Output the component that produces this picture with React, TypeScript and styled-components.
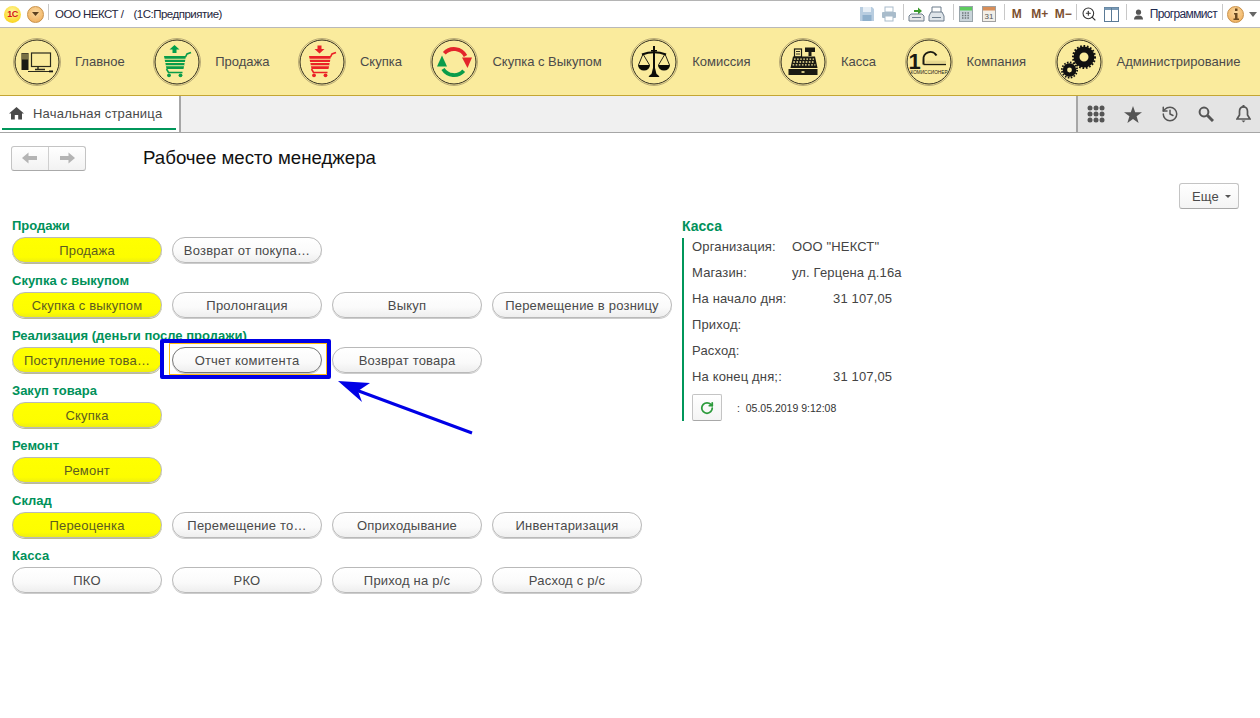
import React from "react";
import styled, { createGlobalStyle } from "styled-components";
import { History, RotateCw, ZoomIn } from "lucide-react";

const Global = createGlobalStyle`
  html, body { margin: 0; padding: 0; background: #fff; }
  body { font-family: "Liberation Sans", Arial, sans-serif; width: 1260px; height: 718px; overflow: hidden; }
  * { box-sizing: border-box; }
`;

const Page = styled.div`
  position: relative;
  width: 1260px;
  height: 718px;
  background: #fff;
`;

/* ---- title bar ---- */
const TitleBar = styled.header`
  height: 28px;
  border-top: 1px solid #b4b4b4;
  border-bottom: 1px solid #b9b9b9;
  display: flex;
  align-items: center;
  padding-left: 4px;
  background: #fff;
`;
const LogoDot = styled.span`
  width: 17px;
  height: 17px;
  border-radius: 50%;
  background: radial-gradient(circle at 50% 35%, #fff9a8, #fbd92c 70%, #eebc1c);
  color: #d5161c;
  font-size: 9px;
  font-weight: 700;
  display: flex;
  align-items: center;
  justify-content: center;
  letter-spacing: -0.5px;
  margin-right: 6px;
`;
const MenuDot = styled.span`
  width: 17px;
  height: 17px;
  border-radius: 50%;
  background: radial-gradient(circle at 50% 35%, #fbd9a0, #eeaa55);
  border: 1px solid #c89048;
  display: flex;
  align-items: center;
  justify-content: center;
  margin-right: 2px;
`;
const TitleSep = styled.span<{ $r: number; $l: number }>`
  width: 1px;
  height: 16px;
  margin: -4px ${(p) => p.$r}px 0 ${(p) => p.$l}px;
  background: #c8c8c8;
`;
const TitleText = styled.span<{ $gap?: number }>`
  font-size: 11.5px;
  color: #26263c;
  letter-spacing: -0.5px;
  white-space: nowrap;
  margin-left: ${(p) => p.$gap ?? 0}px;
`;
const Tools = styled.div`
  margin-left: auto;
  display: flex;
  align-items: center;
`;
const ToolIcon = styled.span<{ $w?: number }>`
  width: ${(p) => p.$w ?? 22}px;
  height: 22px;
  display: flex;
  align-items: center;
  justify-content: center;
`;
const Mem = styled.span<{ $w: number }>`
  width: ${(p) => p.$w}px;
  text-align: center;
  font-size: 12px;
  font-weight: 700;
  color: #7c5030;
`;
const UserName = styled.span`
  font-size: 12px;
  letter-spacing: -0.65px;
  color: #1f2a50;
  white-space: nowrap;
  margin-left: 5px;
`;

/* ---- section panel ---- */
const SectionBar = styled.nav`
  height: 68px;
  background: #faeb9d;
  border-bottom: 1px solid #c4a634;
  display: flex;
  align-items: center;
  gap: 28.5px;
  padding-left: 13px;
`;
const Section = styled.a`
  display: flex;
  align-items: center;
  gap: 14px;
  font-size: 13px;
  color: #4a4a4a;
  white-space: nowrap;
`;
const SectionIcon = styled.svg`
  width: 48px;
  height: 48px;
  flex: none;
`;

/* ---- tabs ---- */
const TabBar = styled.div`
  height: 37px;
  background: #f0f0f0;
  border-bottom: 1px solid #a6a6a6;
  display: flex;
  justify-content: space-between;
`;
const Tab = styled.div`
  width: 181px;
  height: 36px;
  background: #fff;
  border-right: 2px solid #a6a6a6;
  padding: 0 0 2px 9px;
  display: flex;
  align-items: center;
  gap: 9px;
  font-size: 13px;
  color: #4a4a4a;
  letter-spacing: 0.2px;
  position: relative;
  &::after {
    content: "";
    position: absolute;
    left: 2px;
    right: 3px;
    bottom: 2px;
    height: 2px;
    background: #00965a;
  }
`;
const TabTools = styled.div`
  width: 184px;
  height: 36px;
  background: #e4e4e4;
  border-left: 2px solid #a6a6a6;
  display: flex;
  align-items: center;
  padding-left: 8px;
  gap: 16.75px;
  color: #555;
`;
const TabTool = styled.span`
  width: 20px;
  height: 20px;
  display: flex;
  align-items: center;
  justify-content: center;
`;

/* ---- content ---- */
const Content = styled.main`
  padding: 12px 21px 0 12px;
`;
const HeadRow = styled.div`
  display: flex;
  align-items: center;
  height: 26px;
`;
const NavGroup = styled.div`
  width: 75px;
  height: 25px;
  margin-left: -1px;
  border: 1px solid #c4c4c4;
  border-bottom-color: #aaa;
  border-radius: 3px;
  background: linear-gradient(#fff, #f2f2f2);
  display: flex;
`;
const NavCell = styled.span`
  flex: 1;
  display: flex;
  align-items: center;
  justify-content: center;
  & + & { border-left: 1px solid #cfcfcf; }
`;
const PageTitle = styled.h1`
  margin: 0 0 0 57px;
  font-size: 18.67px;
  font-weight: 400;
  color: #111;
`;
const ActionRow = styled.div`
  display: flex;
  justify-content: flex-end;
  margin-top: 12px;
  height: 26px;
`;
const MoreButton = styled.button`
  width: 60px;
  height: 26px;
  font: inherit;
  font-size: 13px;
  letter-spacing: 0.2px;
  color: #4a4a4a;
  background: linear-gradient(#fff, #f4f4f4);
  border: 1px solid #c4c4c4;
  border-bottom-color: #a8a8a8;
  border-radius: 3px;
  display: flex;
  align-items: center;
  justify-content: center;
  gap: 6px;
  padding: 0 0 0 5px;
  &::after {
    content: "";
    border-left: 3px solid transparent;
    border-right: 3px solid transparent;
    border-top: 3px solid #555;
  }
`;
const Columns = styled.div`
  display: flex;
  margin-top: 8px;
`;
const LeftColumn = styled.div`
  width: 670px;
  display: flex;
  flex-direction: column;
  gap: 9px;
`;
const Group = styled.section`
  display: flex;
  flex-direction: column;
  gap: 2px;
`;
const GroupTitle = styled.h2`
  margin: 0;
  height: 18px;
  line-height: 18px;
  font-size: 13px;
  font-weight: 700;
  color: #00915a;
  white-space: nowrap;
`;
const ButtonRow = styled.div`
  display: flex;
  gap: 10px;
`;
const Pill = styled.button<{ $accent?: boolean; $wide?: boolean; $focus?: boolean }>`
  width: ${(p) => (p.$wide ? 180 : 150)}px;
  height: 26px;
  padding: 0 6px;
  border-radius: 13px;
  font: inherit;
  font-size: 13px;
  letter-spacing: 0.2px;
  white-space: nowrap;
  overflow: hidden;
  color: ${(p) => (p.$accent ? "#5c5c20" : "#4a4a4a")};
  background: ${(p) => (p.$accent ? "linear-gradient(#ffff00, #fdfd00 80%, #eeee10)" : "linear-gradient(#fff, #fafafa 60%, #eee)")};
  border: 1px solid ${(p) => (p.$focus ? "#777" : "#b9b9b9")};
  box-shadow: 0 1px 0 ${(p) => (p.$accent ? "#bcbc90" : "#ccc")};
`;

const Cash = styled.aside`
  display: flex;
  flex-direction: column;
  color: #4a4a4a;
  font-size: 13px;
`;
const CashTitle = styled.h2`
  margin: 0;
  height: 18px;
  line-height: 18px;
  font-size: 14px;
  font-weight: 700;
  color: #00915a;
`;
const CashBody = styled.div`
  margin-top: 3px;
  border-left: 2px solid #00965a;
  padding-left: 8px;
  height: 183px;
`;
const CashRow = styled.div`
  height: 26px;
  line-height: 18px;
  display: flex;
  align-items: flex-start;
  color: #444;
  letter-spacing: 0.15px;
`;
const CashLabel = styled.span`
  width: 100px;
`;
const CashValue = styled.span<{ $amount?: boolean }>`
  padding-left: ${(p) => (p.$amount ? 41 : 0)}px;
`;
const CashFoot = styled.div`
  display: flex;
  align-items: center;
  font-size: 10.5px;
  color: #333;
`;
const Refresh = styled.button`
  width: 30px;
  height: 27px;
  padding: 0;
  background: linear-gradient(#fff, #f4f4f4);
  border: 1px solid #c4c4c4;
  border-bottom-color: #a8a8a8;
  border-radius: 2px;
  color: #2d9b3c;
  display: flex;
  align-items: center;
  justify-content: center;
  margin-right: 15px;
`;
const Stamp = styled.span`
  white-space: pre;
`;

/* ---- overlays (annotation drawn over the page) ---- */
const Frame = styled.div`
  position: absolute;
  left: 160px;
  top: 339px;
  width: 171px;
  height: 40px;
  border: 4px solid #0000e6;
  border-radius: 2px;
  &::after {
    content: "";
    position: absolute;
    left: 5px;
    right: 0;
    top: 0;
    bottom: 0;
    border: 1px solid #ffb90f;
  }
`;
const Arrow = styled.svg`
  position: absolute;
  left: 330px;
  top: 370px;
  width: 150px;
  height: 70px;
`;

const Ring = () => (
  <>
    <circle cx="24" cy="24" r="23.5" fill="none" stroke="#a89a6c" strokeWidth="0.8" />
    <circle cx="24" cy="24" r="22" fill="none" stroke="#2e2a1c" strokeWidth="1" />
  </>
);

const Cart = ({ color }: { color: string }) => (
  <>
    <path d="M11 18H33L30.5 31H13.5Z" fill={color} />
    <path d="M11 21.3H33M11.5 24.5H32.5M12.5 27.7H31" stroke="#faeb9d" strokeWidth="1.1" />
    <path d="M13.5 31L15.5 34.5H29.5M32.5 19L34 16L38 14.4" fill="none" stroke={color} strokeWidth="1.6" />
    <circle cx="16" cy="37.3" r="1.9" fill={color} />
    <circle cx="27.5" cy="37.3" r="1.9" fill={color} />
  </>
);

const Icons: Record<string, React.ReactNode> = {
  main: (
    <>
      <rect x="8.5" y="15" width="7" height="17" fill="#1a1a14" />
      <rect x="9" y="15.5" width="6" height="6" fill="#776f44" />
      <rect x="18.5" y="15" width="19" height="13.5" fill="none" stroke="#2a2a1c" strokeWidth="1.2" />
      <path d="M25 28.5V31M22 31.5H32" stroke="#2a2a1c" strokeWidth="1.4" />
      <path d="M15 33.5H37" stroke="#2a2a1c" strokeWidth="1" />
      <rect x="36" y="32.5" width="4" height="1.8" fill="#111" />
    </>
  ),
  sale: (
    <>
      <path d="M21.5 7L26.5 11.5H23.5V15H19.5V11.5H16.5Z" fill="#00a04c" />
      <Cart color="#0a9c4a" />
    </>
  ),
  buy: (
    <>
      <path d="M21.5 15.5L26.5 11H23.5V7.5H19.5V11H16.5Z" fill="#ea2127" />
      <Cart color="#ea2127" />
    </>
  ),
  sync: (
    <>
      <path d="M14.3 15.3A13 13 0 0 1 35.5 18" fill="none" stroke="#e3262b" strokeWidth="3.8" />
      <path d="M32 19.5H42L37.5 30Z" fill="#e3262b" />
      <path d="M33.7 32.7A13 13 0 0 1 13 31" fill="none" stroke="#0a9c4a" strokeWidth="3.8" />
      <path d="M7 28.5H17L12 17.5Z" fill="#0a9c4a" />
    </>
  ),
  scale: (
    <>
      <path d="M23 8H25V12H27V13.5H25V30L26.5 36H21.5L23 30V13.5H21V12H23Z" fill="#0c0c08" />
      <path d="M18.5 39C20 36 22 36 24 34.5C26 36 28 36 29.5 39Z" fill="#0c0c08" />
      <path d="M12 16.5Q24 12 36 16.5" fill="none" stroke="#0c0c08" strokeWidth="2.2" />
      <path d="M13 16L8.5 27M13 16L19.5 27M35 16L28.5 27M35 16L39.5 27" stroke="#0c0c08" strokeWidth="0.9" />
      <path d="M8 27H20A6 5.5 0 0 1 8 27Z" fill="#0c0c08" />
      <path d="M28 27H40A6 5.5 0 0 1 28 27Z" fill="#0c0c08" />
    </>
  ),
  cash: (
    <>
      <rect x="15.5" y="11" width="7" height="8" fill="#faeb9d" stroke="#1a1a12" strokeWidth="1.2" />
      <path d="M17 13.5H21M17 16H21" stroke="#1a1a12" strokeWidth="0.9" />
      <path d="M26 9.5H36V14H32.5V18H29.5V14H26Z" fill="#1a1a12" />
      <path d="M14 18.5H36L38.5 30H11.5Z" fill="#1a1a12" />
      <path d="M15 21.2H35M14.3 24H35.7M13.6 26.8H36.4" stroke="#faeb9d" strokeWidth="1.3" strokeDasharray="1.6 1.5" />
      <rect x="9.5" y="31" width="29" height="6" fill="#1a1a12" />
      <rect x="22.5" y="33.2" width="3" height="1.6" fill="#faeb9d" />
    </>
  ),
  company: (
    <>
      <text x="3.5" y="31" fontFamily="Liberation Sans" fontWeight="700" fontSize="22" fill="#1a1a12">1</text>
      <path d="M18.5 26.5V22A7 7 0 0 1 31.5 17.5" fill="none" stroke="#1a1a12" strokeWidth="2" />
      <path d="M18.5 26.5H41" stroke="#1a1a12" strokeWidth="1.4" />
      <path d="M21 24H41" stroke="#e6d890" strokeWidth="2.6" />
      <text x="24" y="35.5" textAnchor="middle" fontFamily="Liberation Sans" fontSize="4.7" fill="#1a1a12">КОМИССИОНЕР</text>
    </>
  ),
  admin: (
    <>
      <circle cx="29" cy="19" r="7.5" fill="none" stroke="#111" strokeWidth="6" />
      <circle cx="29" cy="19" r="11" fill="none" stroke="#111" strokeWidth="2" strokeDasharray="1.7 1.7" />
      <circle cx="14.5" cy="32" r="4.6" fill="none" stroke="#111" strokeWidth="4.4" />
      <circle cx="14.5" cy="32" r="7.6" fill="none" stroke="#111" strokeWidth="1.8" strokeDasharray="1.6 1.4" />
    </>
  ),
};

const sections: [string, string][] = [
  ["main", "Главное"],
  ["sale", "Продажа"],
  ["buy", "Скупка"],
  ["sync", "Скупка с Выкупом"],
  ["scale", "Комиссия"],
  ["cash", "Касса"],
  ["company", "Компания"],
  ["admin", "Администрирование"],
];

type Btn = { t: string; a?: boolean; w?: boolean; f?: boolean };
const groups: { title: string; buttons: Btn[] }[] = [
  { title: "Продажи", buttons: [{ t: "Продажа", a: true }, { t: "Возврат от покупа…" }] },
  {
    title: "Скупка с выкупом",
    buttons: [{ t: "Скупка с выкупом", a: true }, { t: "Пролонгация" }, { t: "Выкуп" }, { t: "Перемещение в розницу", w: true }],
  },
  {
    title: "Реализация (деньги после продажи)",
    buttons: [{ t: "Поступление това…", a: true }, { t: "Отчет комитента", f: true }, { t: "Возврат товара" }],
  },
  { title: "Закуп товара", buttons: [{ t: "Скупка", a: true }] },
  { title: "Ремонт", buttons: [{ t: "Ремонт", a: true }] },
  {
    title: "Склад",
    buttons: [{ t: "Переоценка", a: true }, { t: "Перемещение то…" }, { t: "Оприходывание" }, { t: "Инвентаризация" }],
  },
  { title: "Касса", buttons: [{ t: "ПКО" }, { t: "РКО" }, { t: "Приход на р/с" }, { t: "Расход с р/с" }] },
];

const cashRows: [string, string, boolean][] = [
  ["Организация:", 'ООО "НЕКСТ"', false],
  ["Магазин:", "ул. Герцена д.16а", false],
  ["На начало дня:", "31 107,05", true],
  ["Приход:", "", false],
  ["Расход:", "", false],
  ["На конец дня;:", "31 107,05", true],
];

export default function App() {
  return (
    <Page>
      <Global />
      <TitleBar>
        <LogoDot>1С</LogoDot>
        <MenuDot>
          <svg width="9" height="6" viewBox="0 0 9 6"><path d="M1 1L4.5 5L8 1Z" fill="#5c4020" /></svg>
        </MenuDot>
        <TitleSep $l={2} $r={6} />
        <TitleText>ООО НЕКСТ /</TitleText>
        <TitleText $gap={10}>(1С:Предприятие)</TitleText>
        <Tools>
          <ToolIcon>
            <svg width="16" height="16" viewBox="0 0 16 16"><path d="M1 1H13L15 3V15H1Z" fill="#b8cde0" /><rect x="4" y="1" width="8" height="5" fill="#e6eef5" /><rect x="3.5" y="9" width="9" height="6" fill="#8fb0cc" /></svg>
          </ToolIcon>
          <ToolIcon>
            <svg width="16" height="16" viewBox="0 0 16 16"><rect x="4" y="1" width="8" height="5" fill="#fff" stroke="#a9bccb" /><rect x="1" y="6" width="14" height="6" rx="1" fill="#a9bccb" /><rect x="4" y="10" width="8" height="5" fill="#fff" stroke="#a9bccb" /></svg>
          </ToolIcon>
          <TitleSep $l={3} $r={2} />
          <ToolIcon>
            <svg width="17" height="16" viewBox="0 0 17 16"><path d="M6 4H10V1.5L14 5L10 8.5V6H6Z" fill="#3c9c2c" /><path d="M1 10L3 8H14L16 10V15H1Z" fill="#e8e8e8" stroke="#6c7c8c" /><path d="M4 11.5H13" stroke="#6c7c8c" /></svg>
          </ToolIcon>
          <ToolIcon $w={18}>
            <svg width="17" height="16" viewBox="0 0 17 16"><path d="M4 1H13V7H4Z" fill="#fff" stroke="#6c7c8c" /><path d="M1 10L3 6H14L16 10V15H1Z" fill="#dfe5ea" stroke="#6c7c8c" /><path d="M4 11.5H13" stroke="#6c7c8c" /></svg>
          </ToolIcon>
          <TitleSep $l={7} $r={1} />
          <ToolIcon>
            <svg width="14" height="16" viewBox="0 0 14 16"><rect x="0.5" y="0.5" width="13" height="15" fill="#c9d4da" stroke="#98a4aa" /><rect x="1" y="1" width="12" height="3.5" fill="#5ecb5e" /><path d="M3 7H11M3 9.5H11M3 12H11" stroke="#6a7478" strokeWidth="1.4" strokeDasharray="1.5 1.2" /></svg>
          </ToolIcon>
          <ToolIcon $w={24}>
            <svg width="14" height="16" viewBox="0 0 14 16"><rect x="0.5" y="0.5" width="13" height="15" fill="#f2efe8" stroke="#a0a0a0" /><rect x="1" y="1" width="12" height="3.5" fill="#d88e58" /><text x="7" y="13" textAnchor="middle" fontSize="8" fontFamily="Liberation Sans" fill="#555">31</text></svg>
          </ToolIcon>
          <TitleSep $l={3} $r={4} />
          <Mem $w={16}>М</Mem>
          <Mem $w={30}>М+</Mem>
          <Mem $w={14}>М−</Mem>
          <TitleSep $l={7} $r={1} />
          <ToolIcon>
            <ZoomIn size={16} color="#333" strokeWidth={1.6} />
          </ToolIcon>
          <ToolIcon $w={24}>
            <svg width="15" height="15" viewBox="0 0 15 15"><rect x="0.5" y="0.5" width="14" height="14" fill="#fff" stroke="#5a7a96" /><rect x="0.5" y="0.5" width="14" height="2.5" fill="#7a9ab6" /><path d="M7.5 1V14" stroke="#5a7a96" /></svg>
          </ToolIcon>
          <TitleSep $l={2} $r={5} />
          <ToolIcon $w={13}>
            <svg width="11" height="11" viewBox="0 0 11 11"><circle cx="5.5" cy="3.2" r="2.6" fill="#555" /><path d="M1 10.5Q1 6.5 5.5 6.5T10 10.5Z" fill="#555" /></svg>
          </ToolIcon>
          <UserName>Программист</UserName>
          <TitleSep $l={5} $r={4} />
          <MenuDot>
            <svg width="10" height="14" viewBox="0 0 10 14"><path d="M4 1.5H6.5V4H4ZM3 6H6.5V11.5H8V13H2.5V11.5H4V7.5H3Z" fill="#6a4820" /></svg>
          </MenuDot>
          <ToolIcon $w={14}>
            <svg width="8" height="5" viewBox="0 0 8 5"><path d="M0 0H8L4 5Z" fill="#666" /></svg>
          </ToolIcon>
        </Tools>
      </TitleBar>

      <SectionBar>
        {sections.map(([key, label]) => (
          <Section key={key}>
            <SectionIcon viewBox="0 0 48 48">
              <Ring />
              {Icons[key]}
            </SectionIcon>
            {label}
          </Section>
        ))}
      </SectionBar>

      <TabBar>
        <Tab>
          <svg width="15" height="14" viewBox="0 0 15 14"><path d="M7.5 1L15 7.5H13V13.5H9.2V9H5.8V13.5H2V7.5H0Z" fill="#4a4a4a" /></svg>
          Начальная страница
        </Tab>
        <TabTools>
          <TabTool>
            <svg width="18" height="18" viewBox="0 0 18 18" fill="#555">
              {[3, 9, 15].flatMap((y) => [3, 9, 15].map((x) => <circle key={`${x}${y}`} cx={x} cy={y} r="2.5" />))}
            </svg>
          </TabTool>
          <TabTool>
            <svg width="18" height="17" viewBox="0 0 18 17"><path d="M9 0L11.2 6.2H18L12.6 10.2L14.6 17L9 12.9L3.4 17L5.4 10.2L0 6.2H6.8Z" fill="#555" /></svg>
          </TabTool>
          <TabTool><History size={18} strokeWidth={2} /></TabTool>
          <TabTool>
            <svg width="16" height="16" viewBox="0 0 16 16"><circle cx="6" cy="6" r="4.4" fill="none" stroke="#555" strokeWidth="2" /><path d="M9.5 9.5L15 15" stroke="#555" strokeWidth="3" /></svg>
          </TabTool>
          <TabTool>
            <svg width="15" height="18" viewBox="0 0 15 18"><path d="M7.5 1.8C4.5 1.8 3.5 4 3.5 6.5V10L1 14H14L11.5 10V6.5C11.5 4 10.5 1.8 7.5 1.8Z" fill="none" stroke="#555" strokeWidth="1.7" /><rect x="6.5" y="0" width="2" height="2.5" fill="#555" /><path d="M5.5 15.5H9.5L7.5 17.5Z" fill="#555" /></svg>
          </TabTool>
        </TabTools>
      </TabBar>

      <Content>
        <HeadRow>
          <NavGroup>
            <NavCell>
              <svg width="16" height="12" viewBox="0 0 16 12"><path d="M0 6L6.5 0.5V4H15V8H6.5V11.5Z" fill="#b4b4b4" /></svg>
            </NavCell>
            <NavCell>
              <svg width="16" height="12" viewBox="0 0 16 12"><path d="M16 6L9.5 0.5V4H1V8H9.5V11.5Z" fill="#b4b4b4" /></svg>
            </NavCell>
          </NavGroup>
          <PageTitle>Рабочее место менеджера</PageTitle>
        </HeadRow>
        <ActionRow>
          <MoreButton>Еще</MoreButton>
        </ActionRow>
        <Columns>
          <LeftColumn>
            {groups.map((g) => (
              <Group key={g.title}>
                <GroupTitle>{g.title}</GroupTitle>
                <ButtonRow>
                  {g.buttons.map((b) => (
                    <Pill key={b.t} $accent={b.a} $wide={b.w} $focus={b.f}>{b.t}</Pill>
                  ))}
                </ButtonRow>
              </Group>
            ))}
          </LeftColumn>
          <Cash>
            <CashTitle>Касса</CashTitle>
            <CashBody>
              {cashRows.map(([label, value, amount]) => (
                <CashRow key={label}>
                  <CashLabel>{label}</CashLabel>
                  <CashValue $amount={amount}>{value}</CashValue>
                </CashRow>
              ))}
              <CashFoot>
                <Refresh><RotateCw size={14} strokeWidth={3} /></Refresh>
                <Stamp>:  05.05.2019 9:12:08</Stamp>
              </CashFoot>
            </CashBody>
          </Cash>
        </Columns>
      </Content>

      <Frame />
      <Arrow viewBox="0 0 150 70">
        <path d="M142 63L26 20" stroke="#0000e6" strokeWidth="3" fill="none" />
        <path d="M8 11L40 13L28 21L32 32Z" fill="#0000e6" />
      </Arrow>
    </Page>
  );
}
